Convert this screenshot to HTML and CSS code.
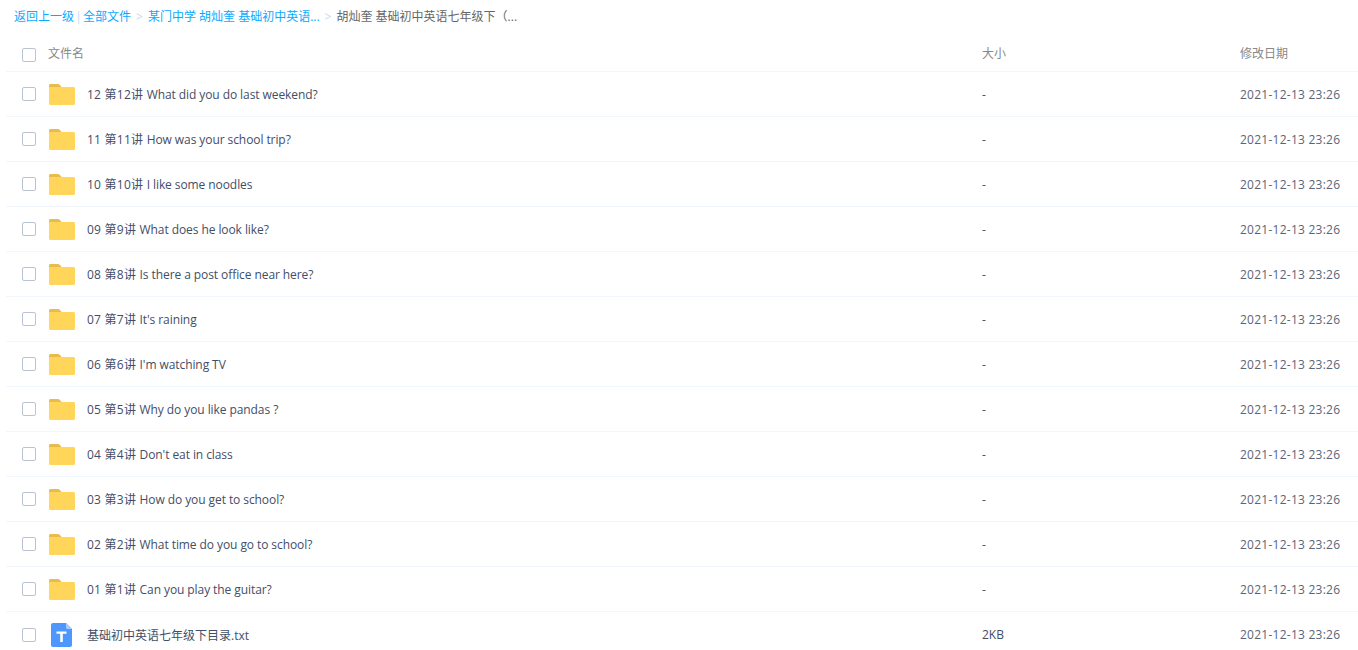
FILE: index.html
```html
<!DOCTYPE html>
<html lang="zh-CN">
<head>
    <meta charset="UTF-8">
    <title>全部文件</title>
    <link rel="stylesheet" href="styles.css">
</head>
<body>
    <svg class="defs" width="0" height="0">
        <symbol id="folder" viewBox="0 0 26 21">
            <path d="M0 1.500C0 .6.600 0 1.500 0h7c1 0 1.800.4 2.400 1L13 3.500H0z" fill="#e9bb4e"/>
            <path d="M0 3h24.500c.9 0 1.500.6 1.500 1.500v15c0 .9-.6 1.500-1.500 1.500h-23C.6 21 0 20.400 0 19.500z" fill="#ffd659"/>
        </symbol>
        <symbol id="txt" viewBox="0 0 21 24">
            <path d="M2 0h13l6 6v16c0 1.100-.9 2-2 2H2c-1.100 0-2-.9-2-2V2C0 .9.900 0 2 0z" fill="#4d97ff"/>
            <path d="M15 0l6 6h-4.500c-.8 0-1.500-.7-1.500-1.500z" fill="#a6cbff"/>
            <path d="M5.500 8.500h10v2.200h-3.700V19H9.200v-8.300H5.500z" fill="#fff"/>
        </symbol>
    </svg>

    <nav class="crumbs">
        <a href="#">返回上一级</a>
        <span class="bar">|</span>
        <a href="#">全部文件</a>
        <span class="arrow">&gt;</span>
        <a href="#">某门中学 胡灿奎 基础初中英语...</a>
        <span class="arrow">&gt;</span>
        <span class="current">胡灿奎 基础初中英语七年级下（...</span>
    </nav>

    <div class="row head">
        <span class="check"></span>
        <span class="name">文件名</span>
        <span class="size">大小</span>
        <span class="date">修改日期</span>
    </div>

    <main id="list"></main>

    <template>
        <div class="row">
            <span class="check"></span>
            <svg class="icon"><use href="#folder"></use></svg>
            <span class="name"><span class="lesson"></span><span class="title"></span></span>
            <span class="size"></span>
            <span class="date">2021-12-13 23:26</span>
        </div>
    </template>

    <script>
const filer = [
    ["12 第12讲 ", "What did you do last weekend?"],
    ["11 第11讲 ", "How was your school trip?"],
    ["10 第10讲 ", "I like some noodles"],
    ["09 第9讲 ", "What does he look like?"],
    ["08 第8讲 ", "Is there a post office near here?"],
    ["07 第7讲 ", "It's raining"],
    ["06 第6讲 ", "I'm watching TV"],
    ["05 第5讲 ", "Why do you like pandas ?"],
    ["04 第4讲 ", "Don't eat in class"],
    ["03 第3讲 ", "How do you get to school?"],
    ["02 第2讲 ", "What time do you go to school?"],
    ["01 第1讲 ", "Can you play the guitar?"],
    ["", "基础初中英语七年级下目录.txt"]
];

const list = document.querySelector("#list");
const rowTemplate = document.querySelector("template").content;

filer.forEach(fil => {
    const klon = rowTemplate.cloneNode(true);
    const isTxt = fil[1].endsWith(".txt");
    klon.querySelector(".lesson").textContent = fil[0];
    klon.querySelector(".title").textContent = fil[1];
    klon.querySelector(".size").textContent = isTxt ? "2KB" : "-";
    if (isTxt) {
        klon.querySelector("use").setAttribute("href", "#txt");
        klon.querySelector(".icon").classList.add("file");
        klon.querySelector(".title").classList.add("plain");
    }
    list.appendChild(klon);
});
    </script>
</body>
</html>
```

FILE: styles.css
```css
* {
    box-sizing: border-box;
}

body {
    margin: 0;
    height: 650px;
    overflow: hidden;
    background: #fff;
    color: #424e67;
    font-family: "Open Sans", "Noto Sans CJK SC", sans-serif;
    font-size: 12px;
}

.defs {
    position: absolute;
}

.crumbs {
    display: flex;
    align-items: center;
    height: 32px;
    padding-left: 14px;
    white-space: nowrap;
}

.crumbs a {
    color: #09aaff;
    text-decoration: none;
}

.bar {
    width: 9px;
    text-align: center;
    color: #c4d8f4;
}

.arrow {
    margin: 0 5px;
    color: #c4d8f4;
}

.current {
    color: #666;
}

.row {
    display: flex;
    align-items: center;
    height: 45px;
    margin-left: 6px;
    padding-left: 16px;
    border-bottom: 1px solid #f2f6fd;
}

.row:last-child {
    border-bottom: 0;
}

.head {
    height: 40px;
    padding-top: 3px;
    color: #888;
}

.head .check {
    margin-top: 4px;
}

.check {
    flex: none;
    width: 14px;
    height: 14px;
    margin-right: 12px;
    border: 1px solid #b8c4d4;
    border-radius: 2px;
}

.icon {
    flex: none;
    width: 26px;
    height: 21px;
    margin-left: 1px;
    margin-right: 12px;
}

.icon.file {
    width: 21px;
    height: 24px;
    margin-left: 3px;
    margin-right: 15px;
}

.name {
    flex: 1;
}

.lesson {
    letter-spacing: 0.25px;
}

.title {
    letter-spacing: -0.08px;
}

.title.plain {
    letter-spacing: 0;
}

.size {
    flex: none;
    width: 258px;
}

.date {
    flex: none;
    width: 118px;
    letter-spacing: 0.25px;
    color: #5a6478;
}

.head .date {
    letter-spacing: 0;
    color: #888;
}
```
